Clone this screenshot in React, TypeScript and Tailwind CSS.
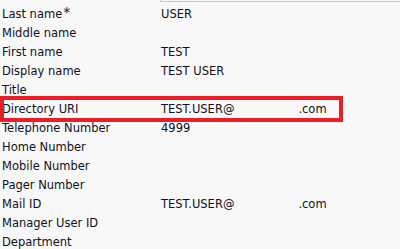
import React from 'react';

const rows: [string, string][] = [
  ['Last name', 'USER'],
  ['Middle name', ''],
  ['First name', 'TEST'],
  ['Display name', 'TEST USER'],
  ['Title', ''],
  ['Directory URI', 'email'],
  ['Telephone Number', '4999'],
  ['Home Number', ''],
  ['Mobile Number', ''],
  ['Pager Number', ''],
  ['Mail ID', 'email'],
  ['Manager User ID', ''],
  ['Department', ''],
];

function Value({ v }: { v: string }) {
  if (v === 'email') {
    return (
      <span className="flex">
        <span>TEST.USER@</span>
        <span className="ml-[64px]">.com</span>
      </span>
    );
  }
  return <span>{v}</span>;
}

export default function App() {
  return (
    <div className="relative w-[400px] h-[249px] overflow-hidden bg-[#f8f8f8] text-[11.5px] text-[#111122] font-['DejaVu_Sans',Verdana,sans-serif]">
      <div className="ml-[160px] h-[2px] border-l border-b border-[#c9c9c9]" />
      <div className="pt-[3px]">
        {rows.map(([label, value]) => (
          <div key={label} className="flex h-[19px] leading-[19px]">
            <div className="w-[160px] pl-[2px] flex">
              <span>{label}</span>
              {label === 'Last name' && <span className="text-[14px] leading-[12px] ml-[1px] mt-[1px]">*</span>}
            </div>
            <div className="pl-[1px]">
              <Value v={value} />
            </div>
          </div>
        ))}
      </div>
      <div className="absolute left-0 top-[96px] w-[343px] h-[26px] border-4 border-[#ee1c25]" />
    </div>
  );
}
